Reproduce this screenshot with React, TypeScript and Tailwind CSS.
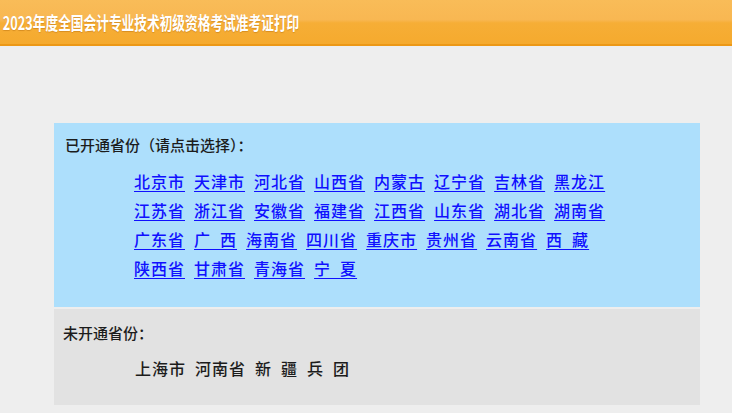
const openRows: string[][] = [
  ['北京市', '天津市', '河北省', '山西省', '内蒙古', '辽宁省', '吉林省', '黑龙江'],
  ['江苏省', '浙江省', '安徽省', '福建省', '江西省', '山东省', '湖北省', '湖南省'],
  ['广东省', '广\u2002西', '海南省', '四川省', '重庆市', '贵州省', '云南省', '西\u2002藏'],
  ['陕西省', '甘肃省', '青海省', '宁\u2002夏'],
];

const closed = ['上海市', '河南省', '新\u2002疆\u2002兵\u2002团'];

export default function App() {
  return (
    <div
      className="min-h-[413px] bg-[#eeeeee] text-[#1c1c1c]"
      style={{ fontFamily: '"Noto Sans CJK SC", "Liberation Sans", sans-serif' }}
    >
      {/* Header bar */}
      <header className="h-[46px] border-b-2 border-[#ec9816] bg-[linear-gradient(to_bottom,#f9bc58_0%,#f8b752_45%,#f6ae36_52%,#f5aa2e_100%)] flex items-center overflow-hidden">
        <h1 className="pl-[4px] text-[18px] font-bold text-white whitespace-nowrap origin-left scale-x-[0.705] [text-shadow:0_1px_1px_rgba(160,90,0,0.35)]">
          2023年度全国会计专业技术初级资格考试准考证打印
        </h1>
      </header>

      <main className="pt-[77px] pl-[54px]">
        <div className="w-[646px]">
          {/* Open provinces */}
          <section className="bg-[#addffc] pl-[11px] pt-[11px] pb-[25px]">
            <p className="text-[15px] leading-[22px] font-medium">已开通省份（请点击选择）：</p>
            <div className="ml-[69px] mt-[10px]">
              {openRows.map((row, i) => (
                <div key={i} className="flex gap-[9px] h-[29px] items-center">
                  {row.map((name) => (
                    <a
                      key={name}
                      href="#"
                      className="text-[16px] leading-[20px] tracking-[1px] font-medium text-[#1010ff] underline underline-offset-[3px]"
                    >
                      {name}
                    </a>
                  ))}
                </div>
              ))}
            </div>
          </section>

          {/* Not yet open */}
          <section className="mt-[2px] bg-[#e2e2e2] pl-[9px] pt-[13px] pb-[23px]">
            <p className="text-[15px] leading-[22px] font-medium">未开通省份：</p>
            <div className="ml-[72px] mt-[9px] flex gap-[9px] h-[29px] items-center">
              {closed.map((name) => (
                <span key={name} className="text-[16px] leading-[20px] tracking-[1px] font-medium">
                  {name}
                </span>
              ))}
            </div>
          </section>
        </div>
      </main>
    </div>
  );
}
